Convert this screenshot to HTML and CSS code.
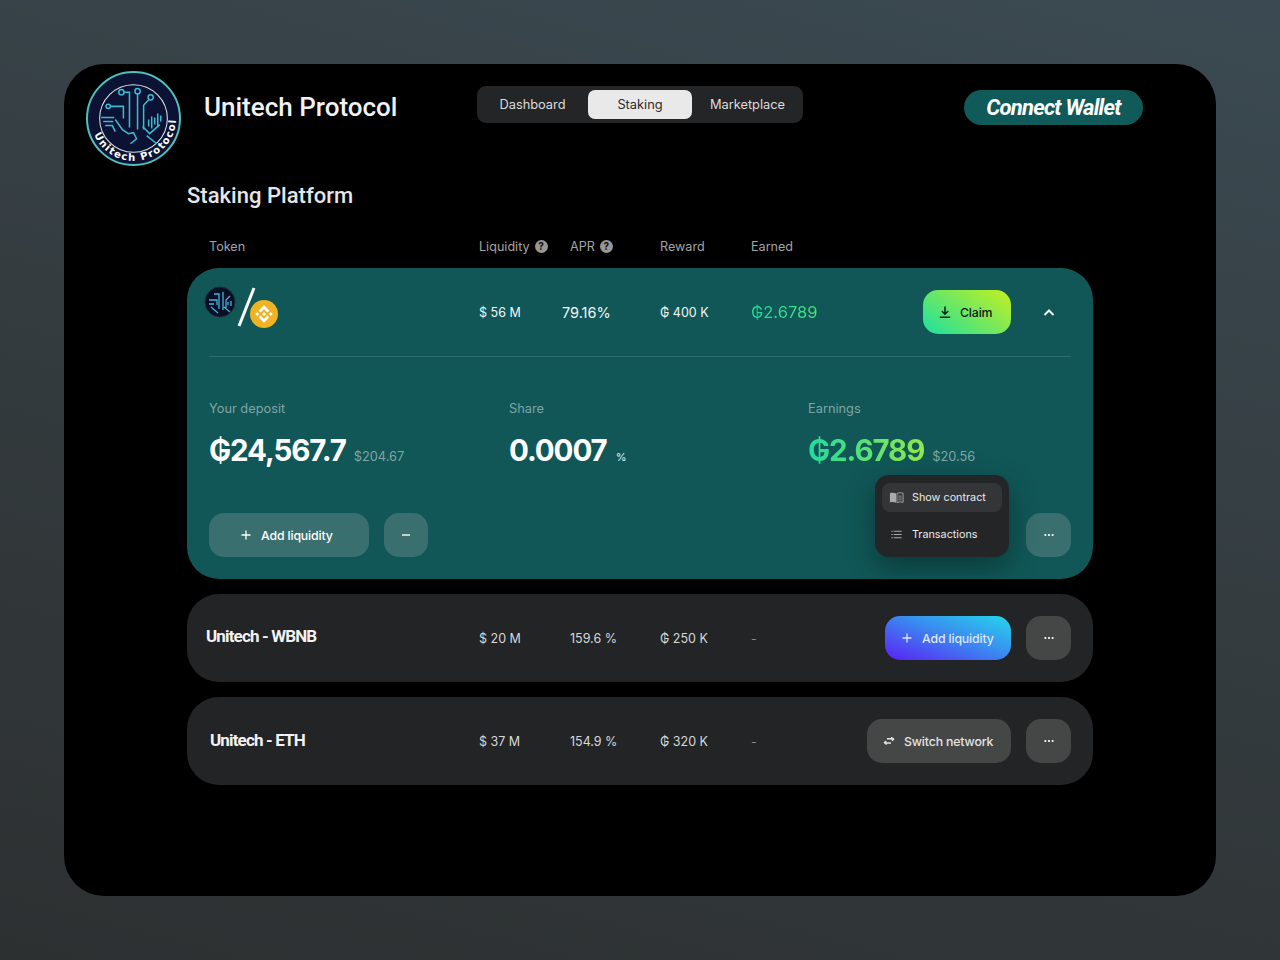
FILE: index.html
```html
<!DOCTYPE html>
<html lang="en">
<head>
<meta charset="utf-8">
<title>Unitech Protocol</title>
<link rel="stylesheet" href="styles.css">
</head>
<body>
<div class="window">
  <header class="top">
    <svg class="logo" viewBox="0 0 94 94" aria-hidden="true">
      <defs><path id="arc" d="M8.100 62.700 A42 42 0 0 0 88.400 39.700"/></defs>
      <circle cx="47" cy="47" r="46" fill="#0b1233" stroke="#4fc0bd" stroke-width="2"/>
      <circle cx="47" cy="47" r="33.500" fill="none" stroke="#d8e6ea" stroke-width="1"/>
      <g fill="none" stroke="#3dbad2" stroke-width="1.500">
        <circle cx="35" cy="21" r="2.600"/><circle cx="51" cy="20" r="2.600"/><circle cx="64" cy="26" r="2.600"/><circle cx="22" cy="35" r="2.200"/>
        <path d="M37.500 21H43V56M51 22.600V58M62.500 28L57 34V58M24.200 35H37V47"/>
        <path d="M15 46H28M17 50H27M19 54H26L29 60"/>
        <path d="M29 48L36 58L42 62L47 61L50 67L44 72M73 53L63 62L56 55M60 64L70 72"/>
        <path d="M62 55V48M65 57V45M68 53V46M71 55V42M74 50V44"/>
      </g>
      <text class="logo-text"><textPath href="#arc">Unitech Protocol</textPath></text>
    </svg>
    <h1 class="brand">Unitech Protocol</h1>
    <nav class="tabs">
      <a class="tab">Dashboard</a>
      <a class="tab tab-on">Staking</a>
      <a class="tab">Marketplace</a>
    </nav>
    <button class="connect">Connect Wallet</button>
  </header>

  <main class="content">
    <h2 class="page-title">Staking Platform</h2>
    <div class="cols head">
      <span>Token</span>
      <span class="with-help">Liquidity <i class="help">?</i></span>
      <span class="with-help">APR <i class="help">?</i></span>
      <span>Reward</span>
      <span>Earned</span>
    </div>

    <section class="row row-open">
      <div class="cols">
        <svg class="pair" viewBox="0 0 76 44" aria-hidden="true">
          <circle cx="16" cy="16" r="15" fill="#0a1024" stroke="#1c2c3c"/>
          <g fill="none" stroke="#45b2e0" stroke-width="1.300">
            <path d="M5 14H13V19M10 8H15V23M19 6V24M26 10L22 14V23M7 21L14 27M26 26L20 21M24 19V16M27 20V15M5 18H10"/>
          </g>
          <path d="M35 40L50 2" stroke="#fff" stroke-width="3"/>
          <circle cx="60" cy="28" r="14" fill="#f0b323"/>
          <svg x="46" y="14" width="28" height="28" viewBox="0 0 32 32">
            <path fill="#fff" d="M12.116 14.404L16 10.52l3.886 3.886 2.26-2.26L16 6l-6.144 6.144 2.26 2.26zM6 16l2.26-2.26L10.52 16l-2.26 2.26L6 16zm6.116 1.596L16 21.48l3.886-3.886 2.26 2.259L16 26l-6.144-6.144-.003-.003 2.263-2.257zM21.48 16l2.26-2.26L26 16l-2.26 2.26L21.48 16zm-3.188-.002h.002V16L16 18.294l-2.291-2.29-.004-.004.004-.003.401-.402.195-.195L16 13.706l2.293 2.293z"/>
          </svg>
        </svg>
        <span class="val">$ 56 M</span>
        <span class="val apr-wide">79.16%</span>
        <span class="val">₲ 400 K</span>
        <span class="earned grad-text">₲2.6789</span>
        <div class="actions">
          <button class="btn btn-claim">
            <svg class="ico" viewBox="0 0 16 16" aria-hidden="true"><path d="M8 2.500V10M4.800 7L8 10.200L11.200 7M2.800 13.200H13.200" fill="none" stroke="currentColor" stroke-width="1.500"/></svg>
            Claim
          </button>
          <button class="square square-plain" aria-label="Collapse">
            <svg class="ico" viewBox="0 0 16 16" aria-hidden="true"><path d="M3.500 11L8 6.500L12.500 11" fill="none" stroke="currentColor" stroke-width="2"/></svg>
          </button>
        </div>
      </div>
      <hr class="rule">
      <div class="stats">
        <div>
          <div class="stat-label">Your deposit</div>
          <div class="stat-line"><strong class="big">₲24,567.7</strong><small class="sub">$204.67</small></div>
        </div>
        <div>
          <div class="stat-label">Share</div>
          <div class="stat-line"><strong class="big">0.0007</strong><small class="pct">%</small></div>
        </div>
        <div>
          <div class="stat-label">Earnings</div>
          <div class="stat-line"><strong class="big grad-text">₲2.6789</strong><small class="sub">$20.56</small></div>
        </div>
      </div>
      <div class="open-actions">
        <button class="btn btn-teal btn-wide">
          <svg class="ico" viewBox="0 0 16 16" aria-hidden="true"><path d="M8 3.500V12.500M3.500 8H12.500" fill="none" stroke="currentColor" stroke-width="1.300"/></svg>
          Add liquidity
        </button>
        <button class="square square-teal" aria-label="Remove">
          <svg class="ico" viewBox="0 0 16 16" aria-hidden="true"><path d="M4 8H12" fill="none" stroke="currentColor" stroke-width="1.500"/></svg>
        </button>
        <button class="square square-teal push" aria-label="More">
          <svg class="ico" viewBox="0 0 16 16" aria-hidden="true"><path d="M3.500 8h1.800M7.100 8h1.800M10.700 8h1.800" fill="none" stroke="currentColor" stroke-width="1.800"/></svg>
        </button>
      </div>
      <div class="menu">
        <a class="menu-item menu-item-on">
          <svg class="ico-menu" viewBox="0 0 16 16" aria-hidden="true"><path d="M1 3.500C3 2.800 5.500 2.800 7.500 3.800V13.500C5.500 12.500 3 12.500 1 13.200Z" fill="#aaa"/><path d="M8.500 3.800C10.500 2.800 13 2.800 15 3.500V13.200C13 12.500 10.500 12.500 8.500 13.500Z" fill="none" stroke="#aaa"/><path d="M10 6.500H13.500M10 8.500H13.500M10 10.500H13.500" stroke="#aaa" stroke-width=".8"/></svg>
          Show contract
        </a>
        <a class="menu-item">
          <svg class="ico-menu" viewBox="0 0 16 16" aria-hidden="true"><path d="M2.500 4.500H4M2.500 8H4M2.500 11.500H4M5 4.500H13.500M5 8H13.500M5 11.500H13.500" stroke="#aaa" stroke-width="1.200"/></svg>
          Transactions
        </a>
      </div>
    </section>

    <section class="row">
      <div class="cols">
        <span class="pair-name name-wbnb">Unitech - WBNB</span>
        <span class="val">$ 20 M</span>
        <span class="val">159.6 %</span>
        <span class="val">₲ 250 K</span>
        <span class="val dash">-</span>
        <div class="actions">
          <button class="btn btn-blue">
            <svg class="ico" viewBox="0 0 16 16" aria-hidden="true"><path d="M8 3.500V12.500M3.500 8H12.500" fill="none" stroke="currentColor" stroke-width="1.300"/></svg>
            Add liquidity
          </button>
          <button class="square square-grey" aria-label="More">
            <svg class="ico" viewBox="0 0 16 16" aria-hidden="true"><path d="M3.500 8h1.800M7.100 8h1.800M10.700 8h1.800" fill="none" stroke="currentColor" stroke-width="1.800"/></svg>
          </button>
        </div>
      </div>
    </section>

    <section class="row">
      <div class="cols">
        <span class="pair-name name-eth">Unitech - ETH</span>
        <span class="val">$ 37 M</span>
        <span class="val">154.9 %</span>
        <span class="val">₲ 320 K</span>
        <span class="val dash">-</span>
        <div class="actions">
          <button class="btn btn-grey">
            <svg class="ico" viewBox="0 0 16 16" aria-hidden="true"><path d="M6 5.800H13M10.800 4V5.800M3 10H10M5.200 11.800V10M3 10L5.200 8.200M13 5.800L10.800 7.600" fill="none" stroke="currentColor" stroke-width="1.500"/></svg>
            Switch network
          </button>
          <button class="square square-grey" aria-label="More">
            <svg class="ico" viewBox="0 0 16 16" aria-hidden="true"><path d="M3.500 8h1.800M7.100 8h1.800M10.700 8h1.800" fill="none" stroke="currentColor" stroke-width="1.800"/></svg>
          </button>
        </div>
      </div>
    </section>
  </main>
</div>
</body>
</html>
```

FILE: styles.css
```css
* { box-sizing: border-box; }
html, body { margin: 0; height: 100%; }
body {
  width: 1280px;
  height: 960px;
  padding: 64px;
  overflow: hidden;
  font-family: Inter, "Noto Sans", sans-serif;
  color: #fff;
  background: linear-gradient(15deg, #2d3031 0%, #333a3d 45%, #3b4a52 100%);
}
.window {
  width: 1152px;
  height: 832px;
  background: #000;
  border-radius: 40px;
  overflow: hidden;
}
button { font-family: inherit; border: 0; padding: 0; cursor: pointer; }

.top { display: flex; align-items: flex-start; padding: 7px 0 0 22px; }
.logo { width: 95px; height: 95px; flex: none; margin-right: 23px; }
.logo-text { font: 700 10px "DejaVu Sans", sans-serif; fill: #fff; letter-spacing: 1.35px; }
.brand {
  width: 273px;
  margin: 20px 0 0;
  font: 500 26px/32px Roboto, sans-serif;
  color: #f2f2f2;
}
.tabs {
  display: flex;
  align-items: center;
  width: 326px;
  height: 37px;
  margin-top: 15px;
  background: #232527;
  border-radius: 9px;
  font-size: 12.800px;
  color: #dcdcdc;
}
.tab { display: flex; align-items: center; justify-content: center; flex: none; height: 29px; border-radius: 7px; width: 111px; }
.tab-on { width: 104px; background: #e9e9e9; color: #2b2b2b; }
.connect {
  width: 179px;
  height: 35px;
  margin: 19px 0 0 161px;
  border-radius: 18px;
  background: #115a5a;
  color: #fff;
  font: italic 700 22px/35px Roboto, sans-serif;
  letter-spacing: -.75px;
}

.content { width: 906px; margin-left: 123px; }
.page-title { margin: 15px 0 0; font: 500 22px/30px Roboto, sans-serif; letter-spacing: .03px; color: #e6e6e6; }

.cols {
  display: grid;
  grid-template-columns: 270px 91px 90px 91px 1fr auto;
  align-items: center;
}
.head {
  margin-top: 25px;
  padding: 0 22px;
  height: 20px;
  font-size: 12.600px;
  color: #a3a3a3;
}
.with-help { display: flex; align-items: center; gap: 5px; }
.help {
  display: flex;
  align-items: center;
  justify-content: center;
  width: 13px;
  height: 13px;
  border-radius: 50%;
  background: #979797;
  color: #111;
  font: 700 10px/13px Inter, sans-serif;
}

.row {
  position: relative;
  height: 88px;
  margin-top: 15px;
  padding: 22px;
  border-radius: 32px;
  background: #222426;
}
.row-open { height: 311px; margin-top: 12px; background: #115757; }
.row .cols { height: 44px; }
.val { font-size: 12.500px; color: #d8d8d8; }
.row-open .val { color: #f2f6f6; }
.row-open .apr-wide { margin-left: -8px; font-size: 14.500px; }
.dash { color: #8a8a8a; }
.earned { font-size: 16.500px; }
.grad-text {
  background: linear-gradient(90deg, #1fdc9c, #92e84a);
  -webkit-background-clip: text;
  background-clip: text;
  color: transparent;
}
.pair { width: 76px; height: 44px; margin: -8px 0 0 -5px; }
.pair-name {
  font: 700 17px/20px Roboto, sans-serif;
  letter-spacing: -.85px;
  color: #f2f2f2;
}
.name-wbnb { margin: -4px 0 0 -3px; }
.name-eth { margin: -3px 0 0 1px; }

.actions { display: flex; gap: 15px; grid-column: 6; }
.ico { width: 16px; height: 16px; flex: none; }
.btn {
  display: flex;
  align-items: center;
  justify-content: flex-start;
  gap: 7px;
  height: 44px;
  padding-left: 14px;
  border-radius: 15px;
  font-size: 12.300px;
  font-weight: 500;
  letter-spacing: -.15px;
}
.btn-claim { width: 88px; color: #0b2019; background: linear-gradient(215deg, #c6f01f, #1ce0a0); }
.btn-blue { width: 126px; color: #dfe6ff; background: linear-gradient(200deg, #25d6ea 0%, #3a8cf0 45%, #5c1ff4 100%); }
.btn-grey { width: 144px; color: #e4e4e4; background: #454746; }
.btn-teal { background: #3a6f6f; color: #fff; }
.btn-wide { width: 160px; padding-left: 29px; }
.square {
  display: flex;
  align-items: center;
  justify-content: center;
  width: 45px;
  height: 44px;
  border-radius: 15px;
  color: #f0f0f0;
}
.square-plain { background: transparent; }
.square-teal { background: #3a6f6f; width: 44px; }
.square-grey { background: #454746; }

.rule { margin: 22px 0 0; border: 0; border-top: 1px solid #2c6c6c; }
.stats { display: grid; grid-template-columns: 300px 299px 1fr; margin-top: 43px; }
.stat-label { font-size: 12.800px; line-height: 18px; color: #7fa5a5; }
.stat-line { display: flex; align-items: baseline; margin-top: 12px; height: 40px; }
.big { font-size: 29.500px; line-height: 40px; font-weight: 700; letter-spacing: -1.100px; }
.sub { margin-left: 8px; font-size: 12.800px; color: #7fa5a5; }
.pct { margin-left: 9px; font-size: 11px; color: #e8f0f0; }
.open-actions { display: flex; gap: 15px; margin-top: 43px; }
.push { margin-left: auto; width: 45px; }

.menu {
  position: absolute;
  top: 207px;
  left: 688px;
  width: 134px;
  height: 82px;
  padding: 8px 7px;
  background: #232527;
  border-radius: 14px;
  box-shadow: 0 10px 28px rgba(0, 0, 0, .35);
  font-size: 10.800px;
  color: #eaeaea;
}
.menu-item { display: flex; align-items: center; gap: 8px; height: 29px; padding-left: 7px; border-radius: 8px; }
.menu-item + .menu-item { margin-top: 8px; }
.menu-item-on { background: #333537; }
.ico-menu { width: 15px; height: 15px; flex: none; }
```
